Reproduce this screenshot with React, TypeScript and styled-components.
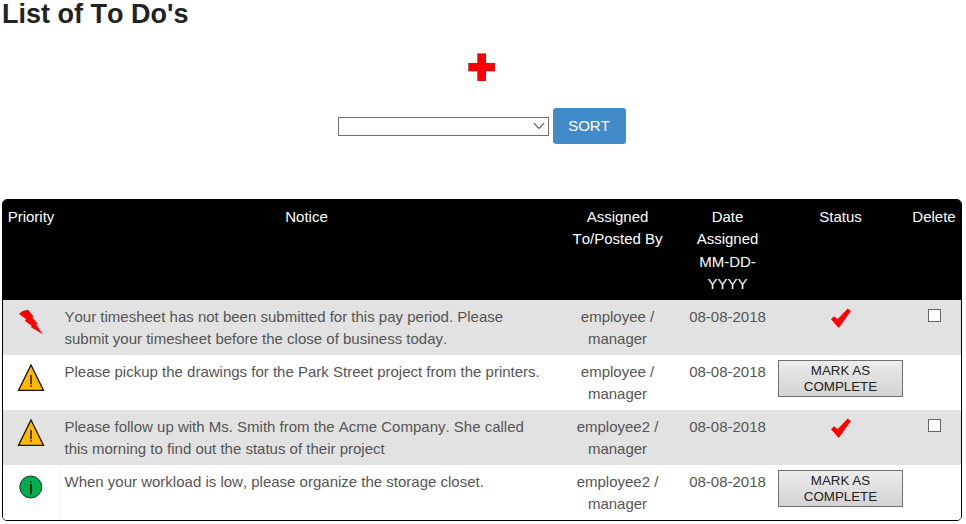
import React from "react";
import styled, { createGlobalStyle, css } from "styled-components";

const GlobalStyle = createGlobalStyle`
  * { box-sizing: border-box; }
  body {
    margin: 0;
    background: #fff;
    color: #555;
    font: 15px/22px "Liberation Sans", Arial, sans-serif;
    font-kerning: none;
  }
`;

const Page = styled.main`
  display: flex;
  flex-direction: column;
  width: 966px;
  height: 524px;
  padding: 0 4px 0 2px;
  overflow: hidden;
`;

const Title = styled.h1`
  margin: 0;
  height: 53px;
  color: #222;
  font-size: 27px;
  font-weight: 700;
  line-height: 28px;
`;

const AddButton = styled.a`
  display: flex;
  align-self: center;
  width: 28px;
  height: 28px;
`;

const SortBar = styled.form`
  display: flex;
  justify-content: center;
  align-items: center;
  gap: 4px;
  margin: 27px 0 55px;
  height: 36px;
`;

const SortField = styled.button`
  display: flex;
  justify-content: flex-end;
  align-items: center;
  width: 211px;
  height: 19px;
  padding: 0 3px 0 0;
  border: 1px solid #707070;
  background: #fff;
`;

const SortButton = styled.button`
  width: 73px;
  height: 36px;
  padding: 0 1px 0 0;
  border: 0;
  border-radius: 3px;
  background: #428bca;
  color: #fff;
  font: inherit;
  font-kerning: none;
`;

const Table = styled.section`
  border: 1px solid #000;
  border-radius: 5px;
  overflow: hidden;
`;

const columns = css`
  display: grid;
  grid-template-columns: 57px 493px 129px 91px 135px 53px;
`;

const Cell = styled.div<{ $align?: "left" | "center" }>`
  padding: 6px 5px 0 ${(p) => (p.$align === "left" ? "4.5px" : "5px")};
  text-align: ${(p) => p.$align ?? "center"};
  white-space: nowrap;
`;

const HeaderRow = styled.div`
  ${columns}
  height: 100px;
  background: #000;
  color: #fff;
  line-height: 22.4px;

  ${Cell}:first-child,
  ${Cell}:last-child {
    padding-left: 4px;
  }
`;

const Row = styled.div<{ $shaded: boolean }>`
  ${columns}
  height: 55px;
  background: ${(p) => (p.$shaded ? "#e2e2e2" : "#fff")};
`;

const IconCell = styled.div<{ $ruled?: boolean }>`
  display: flex;
  justify-content: center;
  align-items: flex-start;
  padding-top: 5px;
  box-shadow: ${(p) => (p.$ruled ? "inset -1px 0 #f5f5f5" : "none")};
`;

const CompleteButton = styled.button`
  width: 125px;
  height: 37px;
  padding: 0;
  border: 1px solid #707070;
  border-radius: 0;
  background: linear-gradient(#ececec, #d3d3d3);
  color: #222;
  font: 13.333px/16px "Liberation Sans", Arial, sans-serif;
`;

const Checkbox = styled.input`
  appearance: none;
  width: 13px;
  height: 13px;
  margin: 4px 0 0;
  border: 1px solid #666;
  background: #fff;
`;

const PlusIcon = () => (
  <svg width="28" height="28" viewBox="0 0 28 28">
    <path d="M9 0h9v10h9v8.5h-9v9.5h-9v-9.5h-9v-8.5h9z" fill="#8e88b0" />
    <path d="M9.7 1h8.3v9h9v8h-9v10h-8.3v-10h-9v-8h9z" fill="#f00" />
  </svg>
);

const ChevronIcon = () => (
  <svg width="12" height="8" viewBox="0 0 12 8">
    <path d="M0.8 1.2 6 6.4 11.2 1.2" fill="none" stroke="#555" strokeWidth="1.1" />
  </svg>
);

const BoltIcon = () => (
  <svg width="29" height="32" viewBox="0 0 29 32">
    <path
      d="M2 8.7 6 6l5-1.2 5.5 7-1.2 .7 5.4 6.2-1.5.8 6.3 9.5-11.8-7 1.3-.9-7.2-5.4 1.7-1.2z"
      fill="#f00"
      stroke="#a44"
      strokeWidth="0.2"
    />
  </svg>
);

const WarningIcon = () => (
  <svg width="29" height="32" viewBox="0 0 29 32">
    <path d="M14 5 26.5 30.4H1.5z" fill="#ffb900" stroke="#1a1400" strokeWidth="1.3" />
    <path d="M14 15v9.2M14 25.2v1.5" stroke="#000" strokeWidth="1.3" />
  </svg>
);

const InfoIcon = () => (
  <svg width="29" height="32" viewBox="0 0 29 32">
    <circle cx="13.8" cy="17" r="11" fill="#00ad4d" stroke="#123b22" strokeWidth="1" />
    <path d="M14 14v10.2M14 10.9v1.7" stroke="#000" strokeWidth="1.5" />
  </svg>
);

const CheckIcon = () => (
  <svg width="19" height="24" viewBox="0 0 19 24" overflow="visible">
    <path d="m0 14.2 3-3 3.6 3L16.7 3.5l3.2 2.4L7.8 23z" fill="#f00" />
  </svg>
);

const icons = { high: <BoltIcon />, medium: <WarningIcon />, info: <InfoIcon /> };

type Todo = {
  priority: keyof typeof icons;
  notice: string[];
  employee: string;
  done: boolean;
};

const todos: Todo[] = [
  {
    priority: "high",
    notice: [
      "Your timesheet has not been submitted for this pay period. Please",
      "submit your timesheet before the close of business today.",
    ],
    employee: "employee",
    done: true,
  },
  {
    priority: "medium",
    notice: ["Please pickup the drawings for the Park Street project from the printers."],
    employee: "employee",
    done: false,
  },
  {
    priority: "medium",
    notice: [
      "Please follow up with Ms. Smith from the Acme Company. She called",
      "this morning to find out the status of their project",
    ],
    employee: "employee2",
    done: true,
  },
  {
    priority: "info",
    notice: ["When your workload is low, please organize the storage closet."],
    employee: "employee2",
    done: false,
  },
];

const headings = [
  ["Priority"],
  ["Notice"],
  ["Assigned", "To/Posted By"],
  ["Date", "Assigned", "MM-DD-", "YYYY"],
  ["Status"],
  ["Delete"],
];

const Lines = ({ lines }: { lines: string[] }) => (
  <>
    {lines.map((line) => (
      <div key={line}>{line}</div>
    ))}
  </>
);

export default function App() {
  return (
    <>
      <GlobalStyle />
      <Page>
        <Title>List of To Do's</Title>
        <AddButton aria-label="Add">
          <PlusIcon />
        </AddButton>
        <SortBar>
          <SortField type="button" aria-label="Sort field">
            <ChevronIcon />
          </SortField>
          <SortButton type="button">SORT</SortButton>
        </SortBar>
        <Table>
          <HeaderRow>
            {headings.map((lines) => (
              <Cell key={lines[0]}>
                <Lines lines={lines} />
              </Cell>
            ))}
          </HeaderRow>
          {todos.map((todo, i) => (
            <Row key={todo.notice[0]} $shaded={i % 2 === 0}>
              <IconCell $ruled={todo.priority === "info"}>{icons[todo.priority]}</IconCell>
              <Cell $align="left">
                <Lines lines={todo.notice} />
              </Cell>
              <Cell>
                <Lines lines={[`${todo.employee} /`, "manager"]} />
              </Cell>
              <Cell>08-08-2018</Cell>
              <IconCell>
                {todo.done ? (
                  <CheckIcon />
                ) : (
                  <CompleteButton>
                    MARK AS
                    <br />
                    COMPLETE
                  </CompleteButton>
                )}
              </IconCell>
              <IconCell>{todo.done && <Checkbox type="checkbox" aria-label="Delete" />}</IconCell>
            </Row>
          ))}
        </Table>
      </Page>
    </>
  );
}
